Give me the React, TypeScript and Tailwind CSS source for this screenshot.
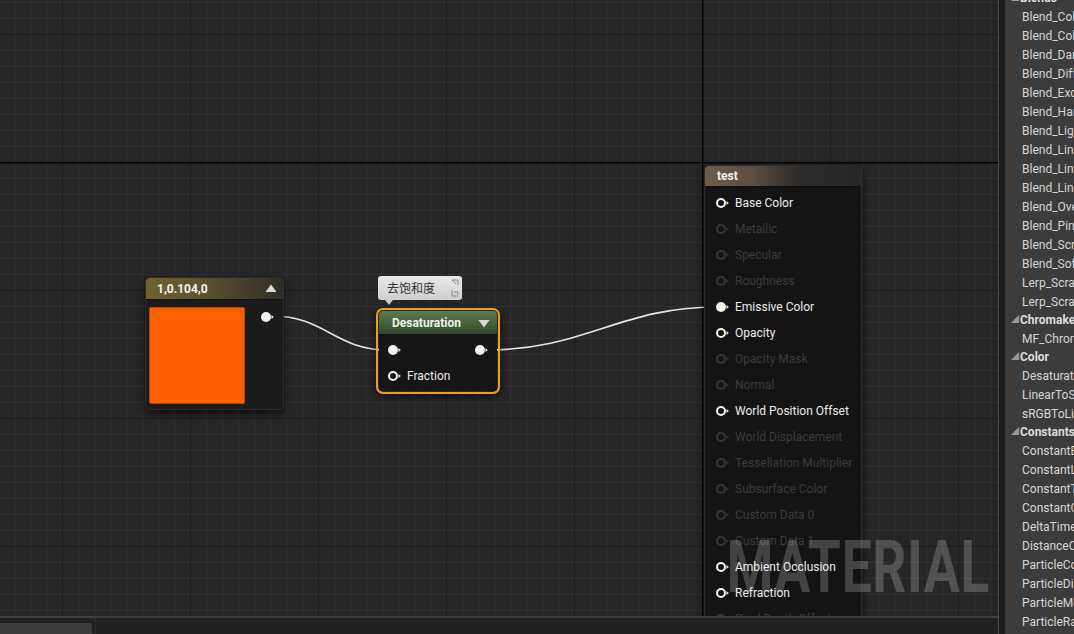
import React from "react"

const font = "font-['Roboto','Noto_Sans_CJK_SC',sans-serif]"

const outputs = [
  { label: "Base Color", on: true },
  { label: "Metallic", on: false },
  { label: "Specular", on: false },
  { label: "Roughness", on: false },
  { label: "Emissive Color", on: true, linked: true },
  { label: "Opacity", on: true },
  { label: "Opacity Mask", on: false },
  { label: "Normal", on: false },
  { label: "World Position Offset", on: true },
  { label: "World Displacement", on: false },
  { label: "Tessellation Multiplier", on: false },
  { label: "Subsurface Color", on: false },
  { label: "Custom Data 0", on: false },
  { label: "Custom Data 1", on: false },
  { label: "Ambient Occlusion", on: true },
  { label: "Refraction", on: true },
  { label: "Pixel Depth Offset", on: false },
]

const palette: { name: string; header?: boolean }[] = [
  { name: "Blends", header: true },
  { name: "Blend_ColorBurn" },
  { name: "Blend_ColorDodge" },
  { name: "Blend_Darken" },
  { name: "Blend_Difference" },
  { name: "Blend_Exclusion" },
  { name: "Blend_HardLight" },
  { name: "Blend_Lighten" },
  { name: "Blend_LinearBurn" },
  { name: "Blend_LinearDodge" },
  { name: "Blend_LinearLight" },
  { name: "Blend_Overlay" },
  { name: "Blend_PinLight" },
  { name: "Blend_Screen" },
  { name: "Blend_SoftLight" },
  { name: "Lerp_ScratchGrime" },
  { name: "Lerp_ScratchGrime2" },
  { name: "Chromakeying", header: true },
  { name: "MF_ChromaKeyer" },
  { name: "Color", header: true },
  { name: "Desaturation" },
  { name: "LinearToSRGB" },
  { name: "sRGBToLinear" },
  { name: "Constants", header: true },
  { name: "ConstantBiasScale" },
  { name: "ConstantLerp" },
  { name: "ConstantToVector" },
  { name: "ConstantOne" },
  { name: "DeltaTime" },
  { name: "DistanceCullFade" },
  { name: "ParticleColor" },
  { name: "ParticleDirection" },
  { name: "ParticleMotionBlurFade" },
  { name: "ParticleRadius" },
]

function Pin({ filled, dim }: { filled?: boolean; dim?: boolean }) {
  const c = dim ? "#363636" : "#f2f2f2"
  return (
    <svg width="14" height="12" viewBox="0 0 14 12" className="shrink-0">
      {filled ? (
        <circle cx="6" cy="6" r="5" fill={c} />
      ) : (
        <circle cx="6" cy="6" r="4" fill="none" stroke={c} strokeWidth="2" />
      )}
      <path d="M11.5 4 L13.8 6 L11.5 8 Z" fill={c} />
    </svg>
  )
}

function Tri({ down }: { down?: boolean }) {
  return (
    <svg width="12" height="9" viewBox="0 0 12 9">
      {down ? <path d="M0.5 1 L11.5 1 L6 8.5 Z" fill="#d8d8d8" /> : <path d="M0.5 8 L11.5 8 L6 0.5 Z" fill="#d8d8d8" />}
    </svg>
  )
}

function Grid() {
  return (
    <svg className="absolute inset-0" width="998" height="616">
      <defs>
        <pattern id="minor" x="14" y="2" width="16" height="16" patternUnits="userSpaceOnUse">
          <rect x="0" y="0" width="1" height="16" fill="#313131" />
          <rect x="0" y="0" width="16" height="1" fill="#313131" />
        </pattern>
        <pattern id="major" x="62" y="34" width="128" height="128" patternUnits="userSpaceOnUse">
          <rect x="0" y="0" width="1" height="128" fill="#1b1b1b" />
          <rect x="0" y="0" width="128" height="1" fill="#1b1b1b" />
        </pattern>
      </defs>
      <rect width="998" height="616" fill="#262626" />
      <rect width="998" height="616" fill="url(#minor)" />
      <rect width="998" height="616" fill="url(#major)" />
      <rect x="0" y="162" width="998" height="1.5" fill="#050505" />
      <rect x="702" y="0" width="1.5" height="616" fill="#050505" />
    </svg>
  )
}

function Wires() {
  return (
    <svg className="absolute inset-0 pointer-events-none" width="998" height="616">
      <path d="M272 316 C 325 316, 335 350, 388 350" stroke="#e6e6e6" strokeWidth="1.6" fill="none" />
      <path d="M486 350 C 585 350, 620 307, 716 307" stroke="#e6e6e6" strokeWidth="1.6" fill="none" />
    </svg>
  )
}

export default function App() {
  return (
    <div className={`w-[1074px] h-[634px] flex bg-[#222222] overflow-hidden ${font}`}>
      <div className="w-[998px] flex flex-col">
        {/* graph canvas */}
        <div className="relative w-[998px] h-[616px] overflow-hidden">
          <Grid />
          <Wires />

          {/* Constant3Vector */}
          <div className="absolute left-[145px] top-[277px] w-[139px] h-[133px] rounded-[5px] bg-[#1b1b1b] border border-[#2e2e2e] shadow-[0_3px_8px_rgba(0,0,0,0.7)] flex flex-col overflow-hidden">
            <div className="h-[22px] flex items-center justify-between pl-[11px] pr-[6px] bg-[linear-gradient(90deg,#6e6230_0%,#5a5030_45%,#2e2c26_100%)] border-b border-[#111]">
              <span className="text-[12px] font-bold text-[#f4f4f4]">1,0.104,0</span>
              <Tri />
            </div>
            <div className="flex pt-[7px] pl-[3px]">
              <div className="w-[96px] h-[97px] bg-[#ff6100] border border-[#b84400] rounded-[2px]" />
              <div className="ml-[15px] mt-[4px]">
                <Pin filled />
              </div>
            </div>
          </div>

          {/* comment bubble */}
          <div className="absolute left-[378px] top-[276px] w-[84px] h-[24px] rounded-[3px] bg-[linear-gradient(180deg,#e8e8e8,#cfcfcf)] flex items-center pl-[9px] pt-[1px] text-[12px] text-[#333]">
            去饱和度
            <svg className="absolute right-[3px] top-[3px]" width="8" height="18" viewBox="0 0 8 18">
              <path d="M1 1 L7 1 L7 6 M1 1 L5 5" stroke="#8a8a8a" strokeWidth="1" fill="none" />
              <path d="M1 11 L1 17 L7 17 M3 13 L7 13 L7 16" stroke="#8a8a8a" strokeWidth="1" fill="none" />
            </svg>
            <div className="absolute left-[7px] -bottom-[5px] w-0 h-0 border-l-[4px] border-r-[4px] border-t-[5px] border-l-transparent border-r-transparent border-t-[#cfcfcf]" />
          </div>

          {/* Desaturation */}
          <div className="absolute left-[376px] top-[308px] w-[124px] h-[86px] rounded-[7px] border-2 border-[#eea312] p-[1px] shadow-[0_3px_8px_rgba(0,0,0,0.6)]">
            <div className="w-full h-full rounded-[4px] bg-[#161616] flex flex-col overflow-hidden">
              <div className="h-[24px] shrink-0 flex items-center justify-between pl-[13px] pr-[7px] pt-[1px] bg-[linear-gradient(180deg,#5d7a4c_0%,#46603a_55%,#33452c_100%)] border-b border-[#0e0e0e]">
                <span className="text-[12px] font-bold text-[#f0f0f0]">Desaturation</span>
                <Tri down />
              </div>
              <div className="flex items-center justify-between h-[12px] mt-[9px] pl-[8px] pr-[9px]">
                <Pin filled />
                <Pin filled />
              </div>
              <div className="flex items-center gap-[6px] h-[12px] mt-[14px] pl-[8px]">
                <Pin />
                <span className="text-[12px] text-[#e8e8e8]">Fraction</span>
              </div>
            </div>
          </div>

          {/* material result node */}
          <div className="absolute left-[704px] top-[165px] w-[158px] h-[470px] rounded-[5px] bg-[#141414] border border-[#2c2c2c] shadow-[0_3px_8px_rgba(0,0,0,0.7)] flex flex-col overflow-hidden">
            <div className="h-[21px] flex items-center pl-[12px] bg-[linear-gradient(90deg,#6d5c4a_0%,#5c4e42_30%,#2d2b2a_60%,#262626_100%)] border-b border-[#0c0c0c]">
              <span className="text-[12px] font-bold text-[#f2f2f2]">test</span>
            </div>
            <div className="flex flex-col pt-[3px]">
              {outputs.map((o) => (
                <div key={o.label} className="h-[26px] flex items-center gap-[6px] pl-[10px]">
                  <Pin filled={o.linked} dim={!o.on} />
                  <span className={`text-[12px] whitespace-nowrap ${o.on ? "text-[#ececec]" : "text-[#3b3b3b]"}`}>{o.label}</span>
                </div>
              ))}
            </div>
          </div>

          {/* watermark */}
          <div className="absolute left-[683px] top-[527px] w-[336px] text-[72px] leading-[82px] font-bold text-[rgba(255,255,255,0.2)] scale-x-[0.74] tracking-[1px] select-none">
            MATERIAL
          </div>
        </div>

        {/* bottom bar */}
        <div className="flex-1 border-t-2 border-[#3f3f3f] bg-[#212121] flex">
          <div className="w-[92px] mt-[5px] bg-[#3d3d3d] rounded-tr-[2px]" />
          <div className="w-[1px] ml-[3px] bg-[#2c2c2c]" />
        </div>
      </div>

      <div className="w-[1px] bg-[#4a4a4a]" />
      <div className="w-[6px] bg-[#1b1b1b]" />

      {/* palette */}
      <div className="flex-1 bg-[#3c3c3c] overflow-hidden relative">
        <div className="flex flex-col -mt-[11px]">
          {palette.map((p, i) =>
            p.header ? (
              <div key={i} className="h-[18px] shrink-0 flex items-center pl-[6px] gap-[1px] whitespace-nowrap">
                <span className="text-[8px] text-[#9a9a9a]">◢</span>
                <span className="text-[12px] font-bold text-[#dcdcdc]">{p.name}</span>
              </div>
            ) : (
              <div key={i} className="h-[19px] shrink-0 flex items-center pl-[17px] text-[12px] text-[#d6d6d6] whitespace-nowrap">
                {p.name}
              </div>
            )
          )}
        </div>
      </div>
    </div>
  )
}
